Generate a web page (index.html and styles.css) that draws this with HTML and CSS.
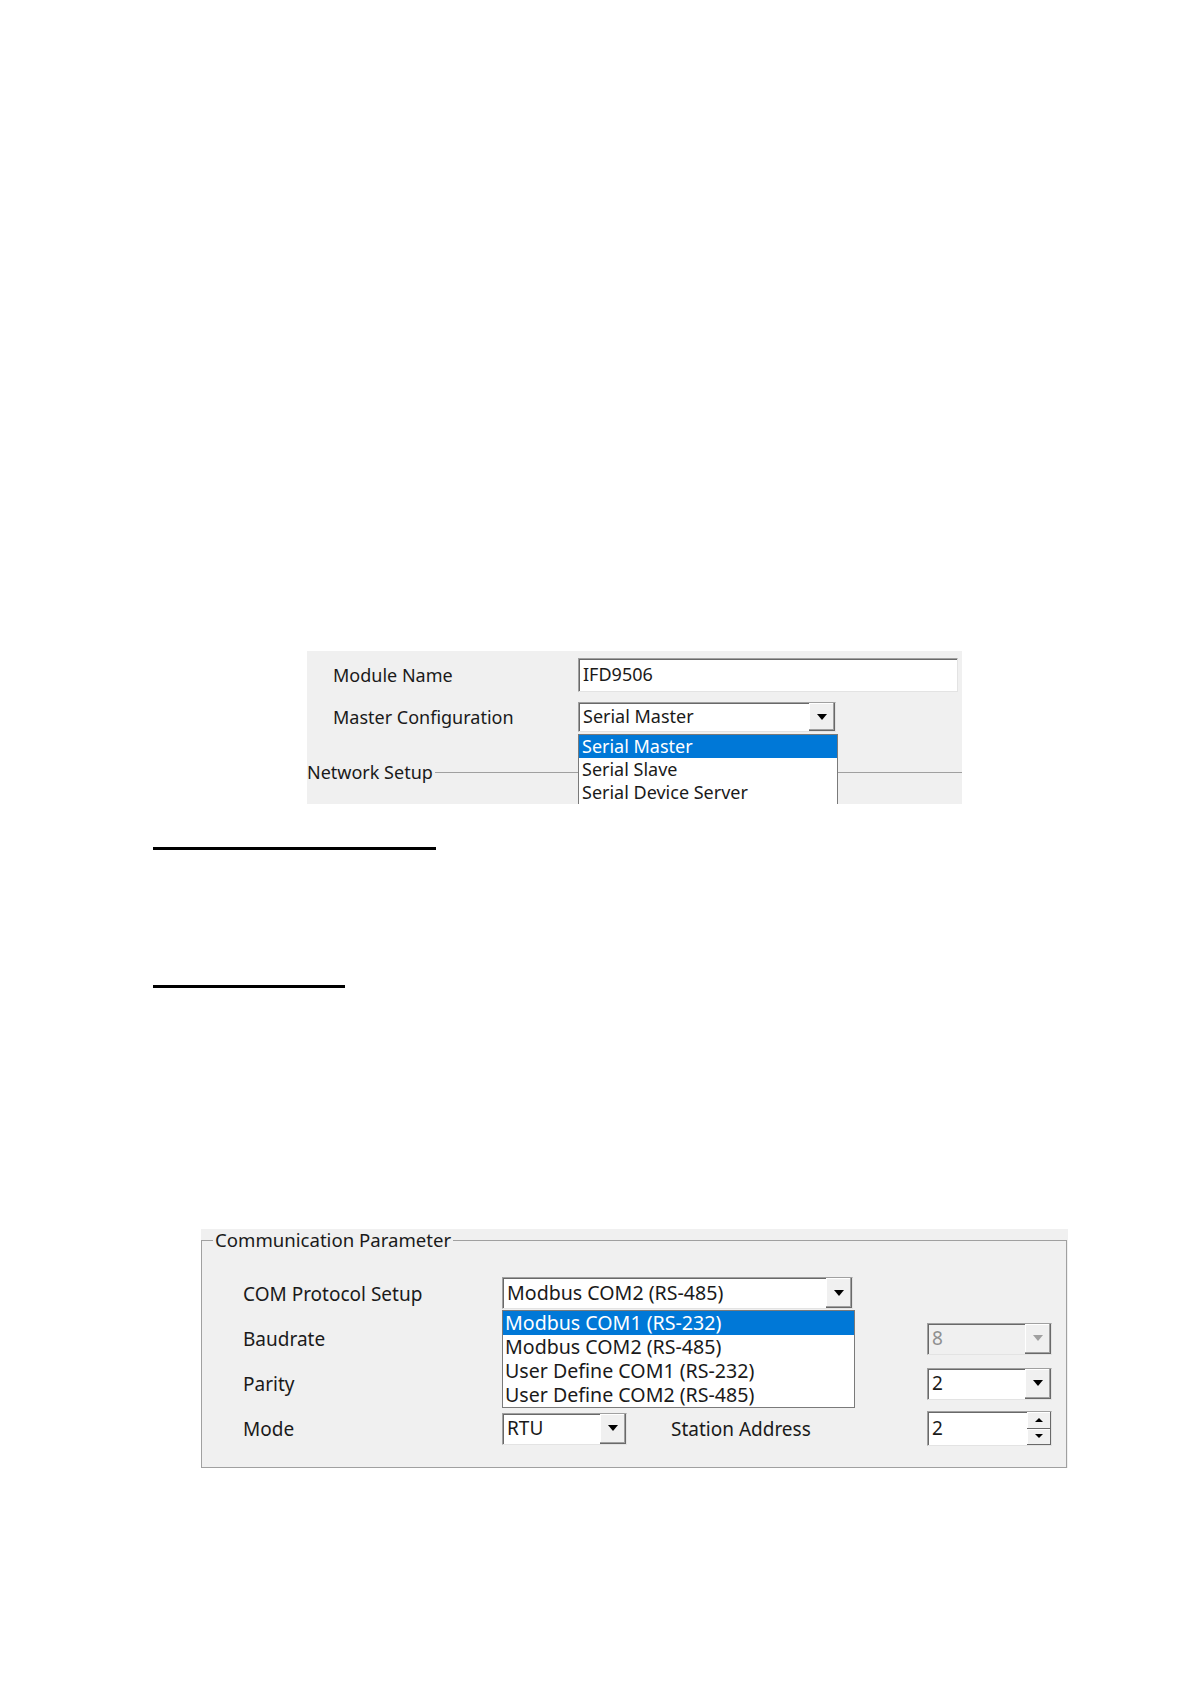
FILE: index.html
```html
<!DOCTYPE html>
<html lang="en">
<head>
    <meta charset="UTF-8">
    <title>IFD9506 Setup</title>
    <link rel="stylesheet" href="styles.css">
</head>
<body>
    <div class="panel-net">
        <div class="form-row">
            <span class="lbl">Module Name</span>
            <div class="textbox">IFD9506</div>
        </div>
        <div class="form-row second">
            <span class="lbl">Master Configuration</span>
            <div class="combo-wrap master">
                <div class="combo">
                    <span class="val">Serial Master</span>
                    <span class="drop"><i class="tri"></i></span>
                </div>
                <ul class="list">
                    <li class="sel">Serial Master</li>
                    <li>Serial Slave</li>
                    <li>Serial Device Server</li>
                </ul>
            </div>
        </div>
        <div class="group-line"><span>Network Setup</span></div>
    </div>

    <div class="rule rule-1"></div>
    <div class="rule rule-2"></div>

    <div class="panel-com">
        <fieldset class="group">
            <legend>Communication Parameter</legend>
            <div class="com-grid">
                <span class="lbl">COM Protocol Setup</span>
                <div class="combo-wrap proto">
                    <div class="combo">
                        <span class="val">Modbus COM2 (RS-485)</span>
                        <span class="drop"><i class="tri"></i></span>
                    </div>
                    <ul class="list">
                        <li class="sel">Modbus COM1 (RS-232)</li>
                        <li>Modbus COM2 (RS-485)</li>
                        <li>User Define COM1 (RS-232)</li>
                        <li>User Define COM2 (RS-485)</li>
                    </ul>
                </div>

                <span class="lbl">Baudrate</span>
                <div class="combo side disabled">
                    <span class="val">8</span>
                    <span class="drop"><i class="tri"></i></span>
                </div>

                <span class="lbl">Parity</span>
                <div class="combo side">
                    <span class="val">2</span>
                    <span class="drop"><i class="tri"></i></span>
                </div>

                <span class="lbl">Mode</span>
                <div class="combo mode">
                    <span class="val">RTU</span>
                    <span class="drop"><i class="tri"></i></span>
                </div>
                <span class="lbl station">Station Address</span>
                <div class="spin side">
                    <span class="val">2</span>
                    <span class="spin-btns">
                        <span class="up"><i class="tri-up"></i></span>
                        <span class="down"><i class="tri"></i></span>
                    </span>
                </div>
            </div>
        </fieldset>
    </div>
</body>
</html>
```

FILE: styles.css
```css
body {
    margin: 0;
    background: #fff;
    font-family: "Noto Sans", "Open Sans", sans-serif;
    font-size: 18px;
    color: #1a1a1a;
}

/* top panel */
.panel-net {
    width: 655px;
    height: 153px;
    margin: 651px 0 0 307px;
    padding-top: 7px;
    box-sizing: border-box;
    background: #f0f0f0;
    overflow: hidden;
}
.form-row {
    display: grid;
    grid-template-columns: 245px auto;
    align-items: center;
    padding-left: 26px;
}
.form-row.second {
    margin-top: 10px;
}
.lbl {
    line-height: 24px;
    white-space: nowrap;
}
.textbox {
    width: 380px;
    height: 34px;
    box-sizing: border-box;
    padding: 0 4px 3px;
    display: flex;
    align-items: center;
    background: #fff;
    border: 1px solid #a0a0a0;
    border-right-color: #e3e3e3;
    border-bottom-color: #e3e3e3;
    box-shadow: inset 1px 1px 0 #696969;
}
.group-line {
    display: flex;
    align-items: center;
    margin-top: 28px;
}
.group-line span {
    line-height: 24px;
}
.group-line::after {
    content: "";
    flex: 1;
    border-top: 1px solid #a0a0a0;
    margin-left: 2px;
}

/* combo boxes */
.combo-wrap {
    position: relative;
}
.combo, .spin {
    display: flex;
    align-items: stretch;
    box-sizing: border-box;
    background: #fff;
    border: 1px solid #a0a0a0;
    border-right-color: #e3e3e3;
    border-bottom-color: #e3e3e3;
    box-shadow: inset 1px 1px 0 #696969;
}
.combo .val, .spin .val {
    flex: 1;
    display: flex;
    align-items: center;
    padding: 0 4px 2px;
    white-space: nowrap;
}
.drop {
    width: 25px;
    display: flex;
    align-items: center;
    justify-content: center;
    background: #f0f0f0;
    border-right: 1px solid #696969;
    border-bottom: 1px solid #696969;
    box-shadow: inset -1px -1px 0 #a0a0a0, inset 1px 1px 0 #fff;
}
.tri {
    width: 0;
    height: 0;
    border-left: 5px solid transparent;
    border-right: 5px solid transparent;
    border-top: 6px solid #000;
}
.tri-up {
    width: 0;
    height: 0;
    border-left: 4px solid transparent;
    border-right: 4px solid transparent;
    border-bottom: 4px solid #000;
}
.spin-btns .tri {
    border-left-width: 4px;
    border-right-width: 4px;
    border-top-width: 4px;
}
.list {
    position: absolute;
    left: 0;
    margin: 0;
    padding: 0;
    list-style: none;
    background: #fff;
    border: 1px solid #7a7a7a;
    z-index: 2;
}
.list li {
    padding: 0 3px;
    white-space: nowrap;
}
.list li.sel {
    background: #0078d7;
    color: #fff;
}
.master .combo {
    width: 258px;
    height: 30px;
}
.master .list {
    top: calc(100% + 2px);
    width: 260px;
    box-sizing: border-box;
}
.master .list li {
    line-height: 23px;
}

/* rules */
.rule {
    height: 3px;
    background: #000;
}
.rule-1 {
    width: 283px;
    margin: 43px 0 0 153px;
}
.rule-2 {
    width: 192px;
    margin: 135px 0 0 153px;
}

/* communication parameter */
.panel-com {
    width: 867px;
    margin: 241px 0 0 201px;
    background: #f0f0f0;
    font-size: 19px;
}
.group {
    width: 866px;
    box-sizing: border-box;
    margin: 0;
    padding: 0;
    border: 1px solid #a0a0a0;
}
.group legend {
    margin-left: 11px;
    padding: 0 2px;
    line-height: 22px;
    font-size: 18.6px;
}
.com-grid {
    display: grid;
    grid-template-columns: 259px 125px 44px 256px 125px;
    grid-template-rows: repeat(4, 33px);
    row-gap: 12px;
    align-items: center;
    padding: 26px 13px 22px 41px;
}
.com-grid .lbl {
    grid-column: 1;
}
.proto {
    grid-column: 2 / 6;
    align-self: start;
    font-size: 19.6px;
}
.proto .combo {
    width: 351px;
    height: 32px;
}
.proto .list {
    top: calc(100% + 1px);
    width: 353px;
    box-sizing: border-box;
}
.proto .list li {
    line-height: 24px;
    padding: 0 2px;
}
.side {
    grid-column: 5;
    height: 32px;
}
.mode {
    grid-column: 2;
    height: 32px;
}
.com-grid .station {
    grid-column: 4;
}
.disabled {
    background: #f0f0f0;
    color: #8f8f8f;
}
.disabled .tri {
    border-top-color: #a0a0a0;
}
.spin {
    height: 35px;
}
.spin-btns {
    width: 24px;
    display: flex;
    flex-direction: column;
}
.spin-btns span {
    flex: 1;
    display: flex;
    align-items: center;
    justify-content: center;
    background: #f0f0f0;
    border-right: 1px solid #696969;
    border-bottom: 1px solid #696969;
    box-shadow: inset 1px 1px 0 #fff;
}
```
